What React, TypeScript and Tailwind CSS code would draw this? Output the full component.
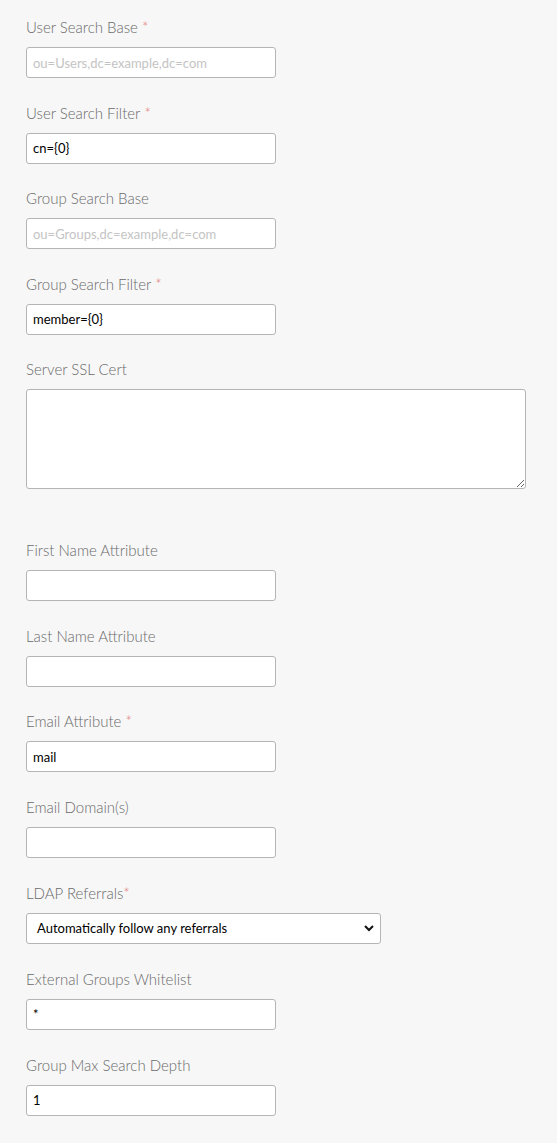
import React from "react";

const font = { fontFamily: '"Lato", "Open Sans", sans-serif' };

function Label({ text, req, tight }: { text: string; req?: boolean; tight?: boolean }) {
  return (
    <div className="h-[20px] leading-[20px] text-[15px] font-light text-[#6a6a6a]">
      {text}
      {req && <span className={`text-[#e57373] ${tight ? "" : "ml-[4px]"}`}>*</span>}
    </div>
  );
}

function Field({ label, req, value, placeholder, pb }: { label: string; req?: boolean; value?: string; placeholder?: string; pb?: string }) {
  return (
    <div className={`pt-[10px] ${pb ?? "pb-[14.5px]"}`}>
      <Label text={label} req={req} />
      <input
        readOnly
        value={value ?? ""}
        placeholder={placeholder}
        className="mt-[10px] block w-[250px] h-[31px] rounded-[3px] border border-[#b5b5b5] bg-white px-[6px] text-[13px] text-black placeholder:text-[#c4c4c4] outline-none"
        style={font}
      />
    </div>
  );
}

export default function App() {
  return (
    <div className="min-h-[1143px] w-full bg-[#f7f7f7] pl-[26px] pt-[7px]" style={font}>
      <Field label="User Search Base" req placeholder="ou=Users,dc=example,dc=com" />
      <Field label="User Search Filter" req value="cn={0}" />
      <Field label="Group Search Base" placeholder="ou=Groups,dc=example,dc=com" />
      <Field label="Group Search Filter" req value="member={0}" />
      <div className="pt-[10px] pb-[41px]">
        <Label text="Server SSL Cert" />
        <textarea
          readOnly
          className="mt-[10px] block w-[500px] h-[100px] rounded-[3px] border border-[#b5b5b5] bg-white outline-none"
        />
      </div>
      <Field label="First Name Attribute" />
      <Field label="Last Name Attribute" />
      <Field label="Email Attribute" req value="mail" />
      <Field label="Email Domain(s)" pb="pb-[15.5px]" />
      <div className="pt-[10px] pb-[14.5px]">
        <Label text="LDAP Referrals" req tight />
        <div className="relative mt-[10px] w-[355px] h-[31px] rounded-[3px] border border-[#b5b5b5] bg-white flex items-center pl-[10px] text-[13px] text-black">
          Automatically follow any referrals
          <svg className="absolute right-[6px] top-[10px]" width="10" height="8" viewBox="0 0 10 8">
            <path d="M1 2 L5 6 L9 2" fill="none" stroke="#111" strokeWidth="2" />
          </svg>
        </div>
      </div>
      <Field label="External Groups Whitelist" value="*" pb="pb-[15px]" />
      <Field label="Group Max Search Depth" value="1" />
    </div>
  );
}
